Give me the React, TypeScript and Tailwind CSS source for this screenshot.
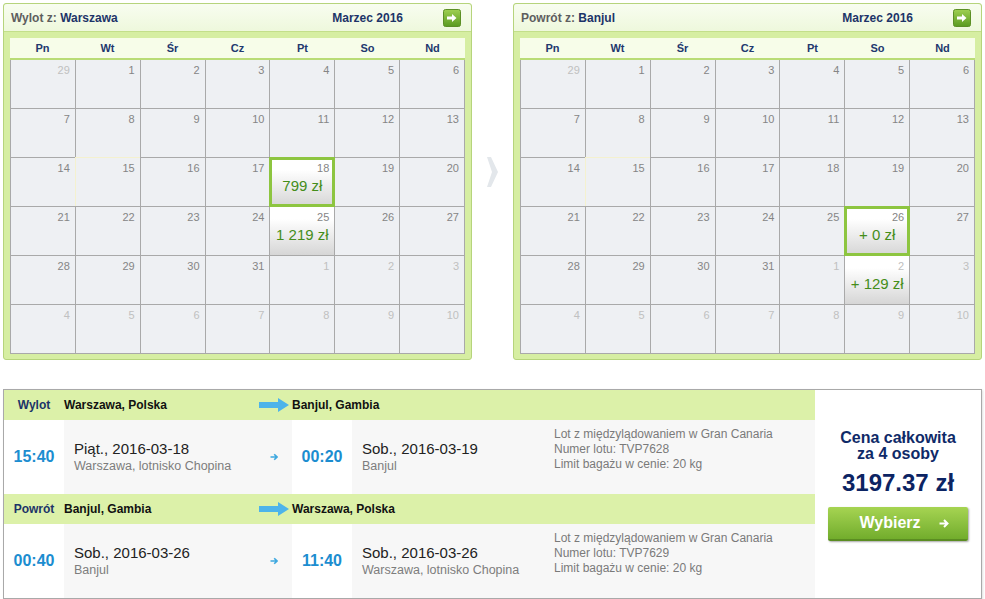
import React from "react";

type Cell = { d: number; other: boolean; price?: string; selected?: boolean; hl?: boolean };

function buildCells(opts: { selected: number; priceIdx: number; selPrice: string; price: string }): Cell[] {
  const cells: Cell[] = [];
  for (let i = 0; i < 42; i++) {
    let d: number;
    let other = false;
    if (i === 0) {
      d = 29;
      other = true;
    } else if (i <= 31) {
      d = i;
    } else {
      d = i - 31;
      other = true;
    }
    const c: Cell = { d, other };
    if (i === opts.selected) {
      c.selected = true;
      c.price = opts.selPrice;
    }
    if (i === opts.priceIdx) c.price = opts.price;
    if (i === 15) c.hl = true;
    cells.push(c);
  }
  return cells;
}

const days = ["Pn", "Wt", "Śr", "Cz", "Pt", "So", "Nd"];

function GreenArrow() {
  return (
    <svg width="18" height="18" viewBox="0 0 18 18">
      <defs>
        <linearGradient id="ga" x1="0" y1="0" x2="0" y2="1">
          <stop offset="0" stopColor="#9fd052" />
          <stop offset="1" stopColor="#5a9a1f" />
        </linearGradient>
      </defs>
      <rect x="0.5" y="0.5" width="17" height="17" rx="2" fill="url(#ga)" stroke="#5c8f25" />
      <polygon points="4,7.5 9,7.5 9,5 13.5,9 9,13 9,10.5 4,10.5" fill="#fff" />
    </svg>
  );
}

function Calendar({ label, city, cells }: { label: string; city: string; cells: Cell[] }) {
  return (
    <div className="w-[469px] rounded-[3px] border border-[#b6d47c] bg-[#d6eea2]">
      <div className="flex h-[28px] items-center justify-between rounded-t-[3px] border-b border-[#c3df8a] bg-linear-to-b from-[#f8fdf0] to-[#eef8dc] pl-[7px] pr-[10px]">
        <div className="text-[12px] font-bold">
          <span className="text-[#5e5e5e]">{label} </span>
          <span className="text-[#1d3468]">{city}</span>
        </div>
        <div className="flex items-center">
          <span className="mr-[40px] text-[12px] font-bold text-[#1d3468]">Marzec 2016</span>
          <GreenArrow />
        </div>
      </div>
      <div className="px-[6px] pb-[5px] pt-[6px]">
        <div className="grid h-[22px] grid-cols-7 border-b-2 border-[#b9dc76] bg-[#f7fde9]">
          {days.map((d) => (
            <div key={d} className="flex items-center justify-center text-[11px] font-bold text-[#22386e]">
              {d}
            </div>
          ))}
        </div>
        <div className="grid grid-cols-7 gap-px border-x border-b border-[#a9a9a9] bg-[#a9a9a9]">
          {cells.map((c, i) => (
            <div
              key={i}
              className={
                "relative h-[48px] " +
                (c.price ? "bg-linear-to-b from-white from-25% to-[#d6d6d6]" : "bg-[#eef0f3]")
              }
            >
              <div
                className={
                  "pr-[5px] pt-[4px] text-right text-[11px] leading-[13px] " +
                  (c.other ? "text-[#c0c0c0]" : "text-[#858585]")
                }
              >
                {c.d}
              </div>
              {c.price && (
                <div className="pt-[1px] text-center text-[15px] leading-[20px] text-[#448d1a]">{c.price}</div>
              )}
              {c.selected && <div className="absolute -inset-px border-[3px] border-[#8dc540]" />}
              {c.hl && <div className="absolute -left-px -top-px bottom-0 right-0 border-l border-t border-[#f4f1cf]" />}
            </div>
          ))}
        </div>
      </div>
    </div>
  );
}

function BigArrow() {
  return (
    <svg width="30" height="14" viewBox="0 0 30 14">
      <polygon points="0,4 19,4 19,0 30,7 19,14 19,10 0,10" fill="#4db4ea" />
    </svg>
  );
}

function SmallArrow() {
  return (
    <svg width="8" height="8" viewBox="0 0 8 8">
      <path d="M0.5 4 H7 M4.2 1.2 L7 4 L4.2 6.8" stroke="#3ea8df" strokeWidth="1.6" fill="none" />
    </svg>
  );
}

function Leg(props: {
  label: string;
  from: string;
  to: string;
  t1: string;
  d1: string;
  s1: string;
  t2: string;
  d2: string;
  s2: string;
  num: string;
}) {
  return (
    <div>
      <div className="flex h-[30px] items-center bg-[#dcf1a9] text-[12px] font-bold">
        <div className="w-[60px] text-center text-[#1d3468]">{props.label}</div>
        <div className="flex w-[228px] items-center justify-between pr-[3px] text-[#111]">
          <span>{props.from}</span>
          <BigArrow />
        </div>
        <div className="text-[#111]">{props.to}</div>
      </div>
      <div className="flex h-[74px]">
        <div className="flex w-[60px] items-center justify-center bg-white text-[16px] font-bold text-[#1c8dd0]">
          {props.t1}
        </div>
        <div className="flex w-[228px] items-center justify-between bg-[#f7f7f7] pl-[10px] pr-[14px]">
          <div>
            <div className="text-[15px] leading-[18px] text-[#222]">{props.d1}</div>
            <div className="text-[12.5px] leading-[16px] text-[#7d7d7d]">{props.s1}</div>
          </div>
          <SmallArrow />
        </div>
        <div className="flex w-[60px] items-center justify-center bg-white text-[16px] font-bold text-[#1c8dd0]">
          {props.t2}
        </div>
        <div className="flex w-[192px] items-center bg-[#f7f7f7] pl-[10px]">
          <div>
            <div className="text-[15px] leading-[18px] text-[#222]">{props.d2}</div>
            <div className="text-[12.5px] leading-[16px] text-[#7d7d7d]">{props.s2}</div>
          </div>
        </div>
        <div className="flex-1 bg-[#f7f7f7] pl-[10px] pt-[7px] text-[12px] leading-[15px] text-[#7a7a7a]">
          <div>Lot z międzylądowaniem w Gran Canaria</div>
          <div>Numer lotu: {props.num}</div>
          <div>Limit bagażu w cenie: 20 kg</div>
        </div>
      </div>
    </div>
  );
}

export default function App() {
  const left = buildCells({ selected: 18, priceIdx: 25, selPrice: "799 zł", price: "1 219 zł" });
  const right = buildCells({ selected: 26, priceIdx: 33, selPrice: "+ 0 zł", price: "+ 129 zł" });
  return (
    <div className="h-[599px] w-[985px] bg-white p-[3px] font-['Liberation_Sans',Arial,sans-serif]">
      <div className="flex">
        <Calendar label="Wylot z:" city="Warszawa" cells={left} />
        <div className="flex w-[41px] justify-center pt-[154px]">
          <svg width="11" height="30" viewBox="0 0 11 30">
            <polygon points="0,0 4,0 11,15 4,30 0,30 5,15" fill="#e3e7eb" />
          </svg>
        </div>
        <Calendar label="Powrót z:" city="Banjul" cells={right} />
      </div>
      <div className="mt-[29px] flex w-[979px] border border-[#a9a9a9] shadow-[1px_1px_2px_rgba(0,0,0,0.12)]">
        <div className="w-[811px]">
          <Leg
            label="Wylot"
            from="Warszawa, Polska"
            to="Banjul, Gambia"
            t1="15:40"
            d1="Piąt., 2016-03-18"
            s1="Warszawa, lotnisko Chopina"
            t2="00:20"
            d2="Sob., 2016-03-19"
            s2="Banjul"
            num="TVP7628"
          />
          <Leg
            label="Powrót"
            from="Banjul, Gambia"
            to="Warszawa, Polska"
            t1="00:40"
            d1="Sob., 2016-03-26"
            s1="Banjul"
            t2="11:40"
            d2="Sob., 2016-03-26"
            s2="Warszawa, lotnisko Chopina"
            num="TVP7629"
          />
        </div>
        <div className="flex flex-1 flex-col items-center bg-white pt-[40px]">
          <div className="text-center text-[16px] font-bold leading-[16px] text-[#0f2a68]">
            <div>Cena całkowita</div>
            <div>za 4 osoby</div>
          </div>
          <div className="mt-[6px] text-[24px] font-bold leading-[30px] text-[#0c2463]">3197.37 zł</div>
          <button className="mt-[9px] flex h-[34px] w-[140px] items-center justify-center gap-[18px] rounded-[2px] border-b-2 border-[#5b8d22] bg-linear-to-b from-[#a6d452] to-[#72ad2c] pl-[12px] text-[16px] font-bold text-white shadow-[1px_1px_2px_rgba(0,0,0,0.35)]">
            <span>Wybierz</span>
            <svg width="10" height="9" viewBox="0 0 10 9">
              <path d="M0.5 4.5 H8.5 M5 1 L8.5 4.5 L5 8" stroke="#fff" strokeWidth="2" fill="none" />
            </svg>
          </button>
        </div>
      </div>
    </div>
  );
}
